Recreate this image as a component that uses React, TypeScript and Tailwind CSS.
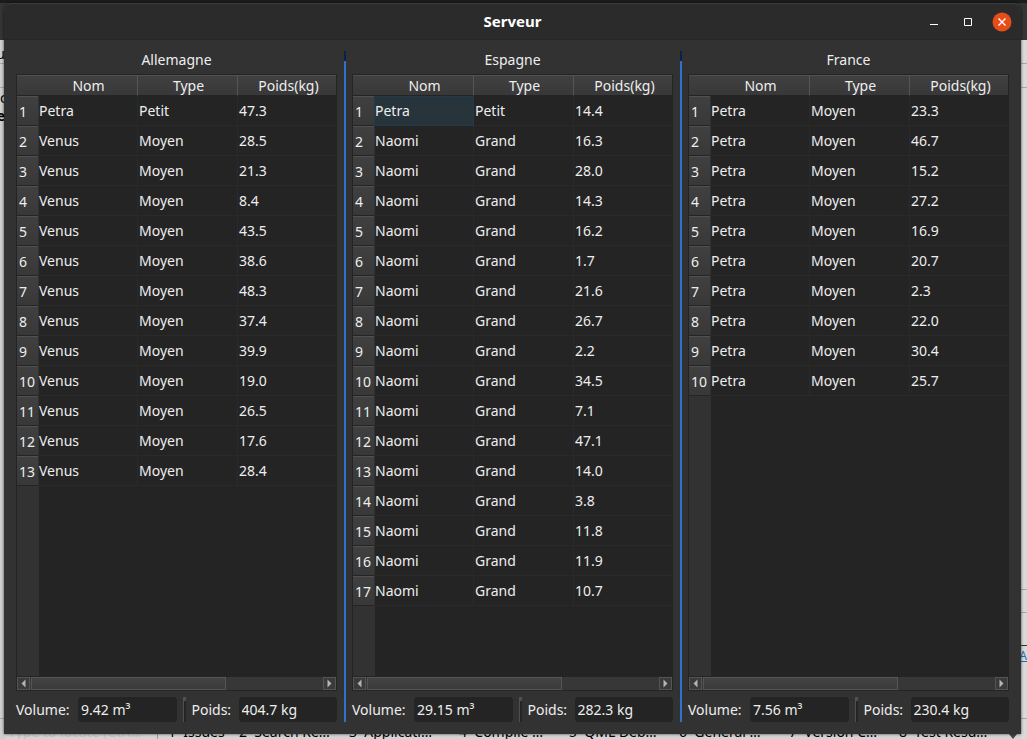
import React from "react";

type Row = [string, string, string];

interface Warehouse {
  id: string;
  country: string;
  rows: Row[];
  volume: string;
  weight: string;
  selected?: boolean;
}

const repeat = (name: string, type: string, weights: string[]): Row[] =>
  weights.map((w) => [name, type, w]);

const warehouses: Warehouse[] = [
  {
    id: "de",
    country: "Allemagne",
    rows: [
      ["Petra", "Petit", "47.3"],
      ...repeat("Venus", "Moyen", [
        "28.5", "21.3", "8.4", "43.5", "38.6", "48.3", "37.4", "39.9", "19.0", "26.5", "17.6", "28.4",
      ]),
    ],
    volume: "9.42 m³",
    weight: "404.7 kg",
  },
  {
    id: "es",
    country: "Espagne",
    rows: [
      ["Petra", "Petit", "14.4"],
      ...repeat("Naomi", "Grand", [
        "16.3", "28.0", "14.3", "16.2", "1.7", "21.6", "26.7", "2.2", "34.5", "7.1", "47.1", "14.0", "3.8", "11.8", "11.9", "10.7",
      ]),
    ],
    volume: "29.15 m³",
    weight: "282.3 kg",
    selected: true,
  },
  {
    id: "fr",
    country: "France",
    rows: repeat("Petra", "Moyen", [
      "23.3", "46.7", "15.2", "27.2", "16.9", "20.7", "2.3", "22.0", "30.4", "25.7",
    ]),
    volume: "7.56 m³",
    weight: "230.4 kg",
  },
];

const columns = ["Nom", "Type", "Poids(kg)"];

const paneTabs = [
  "2  Search Re…", "3  Applicati…", "4  Compile …", "5  QML Deb…", "6  General …", "7  Version C…", "8  Test Resu…",
];

function Backdrop() {
  return (
    <div aria-hidden="true" className="absolute inset-0 flex flex-col overflow-hidden bg-[#d4d4d4] text-black">
      <div className="h-[3px] shrink-0 bg-[#1c1c1c]" />
      <div className="h-[37px] shrink-0 bg-[#353535]" />
      <div className="flex flex-1 justify-between">
        <div className="flex w-[5px] flex-col overflow-hidden bg-[#cfcfcf] text-sm">
          <div className="flex h-6 justify-end border-b border-[#a8a8a8] leading-7">u</div>
          <div className="h-6 border-b border-[#a8a8a8]" />
          <div className="flex h-5 justify-start leading-5">c</div>
          <div className="flex h-5 justify-end leading-4 font-bold">e</div>
          <div className="flex-1" />
          <div className="h-[21px] border-t border-[#a8a8a8]" />
        </div>
        <div className="flex w-[6px] flex-col bg-[#d9d9d9] text-sm">
          <div className="h-6 border-b border-[#a8a8a8]" />
          <div className="h-6 border-b border-[#a8a8a8]" />
          <div className="flex-1" />
          <div className="h-6 border-y border-[#a8a8a8]" />
          <div className="h-8" />
          <div className="flex h-[15px] justify-end border-t border-[#333] text-xs leading-5 text-[#1a70b8] underline">HA</div>
          <div className="h-[59px] border-b border-[#a8a8a8]" />
          <div className="h-5" />
        </div>
      </div>
      <div className="absolute inset-x-0 bottom-0 flex h-[17px] text-sm leading-5">
        <div className="w-[158px] border-r border-[#9a9a9a] pl-2 text-[#c4c4c4]">Type to locate (Ctrl…</div>
        <div className="flex flex-1 whitespace-pre pl-[10px]">
          <span className="w-[71px]">1  Issues</span>
          {paneTabs.map((t) => (
            <span key={t} className="w-[110px] shrink-0">{t}</span>
          ))}
          <svg viewBox="0 0 8 20" className="h-5 w-2 shrink-0"><path d="M0 12h8l-4 5z" fill="#444" /></svg>
        </div>
      </div>
    </div>
  );
}

function TitleBar() {
  return (
    <header className="grid h-9 shrink-0 grid-cols-[1fr_auto_1fr] items-center rounded-t-lg border-t border-[#3c3c3c] bg-[#2b2b2b]">
      <span />
      <h1 className="text-[15px] font-bold text-white">Serveur</h1>
      <div className="flex items-center justify-end gap-[14px] pr-[9px]">
        <button type="button" aria-label="Réduire" className="h-5 w-5">
          <svg viewBox="0 0 20 20" className="h-5 w-5"><path d="M6 12h8v1H6z" fill="#fff" /></svg>
        </button>
        <button type="button" aria-label="Agrandir" className="h-5 w-5">
          <svg viewBox="0 0 20 20" className="h-5 w-5"><path d="M6.5 6.5h7v7h-7z" fill="none" stroke="#fff" /></svg>
        </button>
        <button type="button" aria-label="Fermer" className="h-5 w-5">
          <svg viewBox="0 0 20 20" className="h-5 w-5">
            <circle cx="10" cy="10" r="9.5" fill="#e64d19" />
            <path d="M6.5 6.5l7 7M13.5 6.5l-7 7" stroke="#fff" strokeWidth="1.4" />
          </svg>
        </button>
      </div>
    </header>
  );
}

function ScrollBar() {
  return (
    <div className="flex h-[14px] shrink-0 border-t border-[#242424] bg-[#373737]">
      <button type="button" aria-label="Défiler à gauche" className="w-[13px] border border-[#555] bg-[#3a3a3a]">
        <svg viewBox="0 0 11 11" className="h-[11px] w-[11px]"><path d="M7.5 1.5v8l-4-4z" fill="#b4b4b4" /></svg>
      </button>
      <div className="flex flex-1 pl-px">
        <div className="w-2/3 border border-[#555] bg-gradient-to-b from-[#434343] to-[#3b3b3b]" />
      </div>
      <button type="button" aria-label="Défiler à droite" className="w-[13px] border border-[#555] bg-[#3a3a3a]">
        <svg viewBox="0 0 11 11" className="h-[11px] w-[11px]"><path d="M3.5 1.5v8l4-4z" fill="#b4b4b4" /></svg>
      </button>
    </div>
  );
}

function DataTable({ data }: { data: Warehouse }) {
  return (
    <div className="flex min-w-0 flex-1 flex-col border border-[#242424]">
      <div className="min-w-0 flex-1 overflow-hidden bg-[linear-gradient(to_right,#323232_22px,#242424_22px)]">
        <table aria-labelledby={`${data.id}-title`} className="w-[321px] table-fixed border-separate border-spacing-0">
          <colgroup>
            <col className="w-[21px]" />
            <col className="w-[100px]" />
            <col className="w-[100px]" />
            <col className="w-[100px]" />
          </colgroup>
          <thead>
            <tr className="h-[21px]">
              <td className="border-t border-b border-t-[#505050] border-b-[#242424] bg-gradient-to-b from-[#404040] to-[#383838] p-0" />
              {columns.map((c) => (
                <th
                  key={c}
                  scope="col"
                  className="border-t border-r border-b border-t-[#505050] border-r-[#555] border-b-[#242424] bg-gradient-to-b from-[#404040] to-[#383838] p-0 pl-[2px] text-center leading-[19px] font-normal"
                >
                  {c}
                </th>
              ))}
            </tr>
          </thead>
          <tbody>
            {data.rows.map((row, i) => (
              <tr key={i} className="h-[30px]">
                <th
                  scope="row"
                  className="border-t border-b border-t-[#505050] border-b-[#242424] bg-gradient-to-b from-[#404040] to-[#383838] p-0 pt-px pl-[2px] text-left font-normal"
                >
                  {i + 1}
                </th>
                {row.map((cell, j) => (
                  <td
                    key={j}
                    className={
                      data.selected && i === 0 && j === 0
                        ? "border border-[#22394a] bg-[#28343b] p-0"
                        : "border-r border-b border-[#2a2a2a] p-0 pl-px"
                    }
                  >
                    {cell}
                  </td>
                ))}
              </tr>
            ))}
          </tbody>
        </table>
      </div>
      <ScrollBar />
    </div>
  );
}

function Total({ id, label, value, wide }: { id: string; label: string; value: string; wide?: boolean }) {
  return (
    <>
      <label htmlFor={id} className={wide ? "w-14 shrink-0" : "w-[41px] shrink-0"}>{label}</label>
      <input
        id={id}
        readOnly
        value={value}
        className="h-[25px] w-0 min-w-0 flex-1 rounded-sm bg-[#242424] px-[3px] text-[#eee] outline-none"
      />
    </>
  );
}

function Panel({ data }: { data: Warehouse }) {
  return (
    <section className="flex min-w-0 flex-1 flex-col">
      <h2 id={`${data.id}-title`} className="h-[23px] text-center leading-[17px]">{data.country}</h2>
      <DataTable data={data} />
      <div className="mt-[6px] flex items-center gap-[6px]">
        <Total id={`${data.id}-volume`} label="Volume:" value={data.volume} wide />
        <div className="flex h-[25px] w-[3px]">
          <div className="w-px bg-[#505050]" />
          <div className="flex-1 border-t-4 border-[#505050] bg-[#242424]" />
        </div>
        <Total id={`${data.id}-weight`} label="Poids:" value={data.weight} />
      </div>
    </section>
  );
}

function Splitter() {
  return (
    <div role="separator" aria-orientation="vertical" className="flex w-[15px] shrink-0 justify-center">
      <div className="w-[2px] border-t-[10px] border-[#11203d] bg-[#3071d0]" />
    </div>
  );
}

export default function App() {
  return (
    <div className="relative flex min-h-screen pt-[3px] pr-[6px] pb-[5px] pl-1 font-['Noto_Sans',sans-serif] text-sm text-[#eeeeee]">
      <Backdrop />
      <main className="relative flex min-w-0 flex-1 flex-col rounded-t-lg bg-[#323232] shadow-[0_0_3px_rgba(0,0,0,0.7)]">
        <TitleBar />
        <div className="flex flex-1 border-t border-[#262626] px-3 pt-[11px] pb-3">
          {warehouses.map((w, i) => (
            <React.Fragment key={w.id}>
              {i > 0 && <Splitter />}
              <Panel data={w} />
            </React.Fragment>
          ))}
        </div>
      </main>
    </div>
  );
}
